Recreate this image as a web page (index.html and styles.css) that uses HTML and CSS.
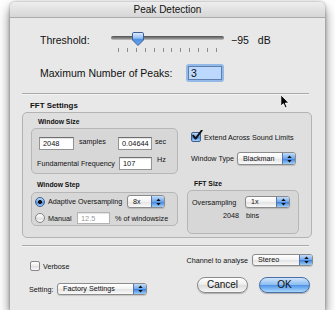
FILE: index.html
```html
<!DOCTYPE html>
<html lang="en">
<head>
    <meta charset="UTF-8">
    <title>Peak Detection</title>
    <link rel="stylesheet" href="styles.css">
</head>
<body>
    <div class="window">
        <div class="titlebar">Peak Detection</div>

        <div class="content">
            <div class="threshold">
                <span class="big th-label">Threshold:</span>
                <div class="slider">
                    <div class="track"></div>
                    <div class="ticks">
                        <i></i><i></i><i></i><i></i><i></i><i></i>
                        <i></i><i></i><i></i><i></i><i></i><i></i>
                    </div>
                    <svg class="knob" viewBox="0 0 12 14">
                        <defs>
                            <linearGradient id="kg" x1="0" y1="0" x2="0" y2="1">
                                <stop offset="0" stop-color="#e4f0fd"/>
                                <stop offset="0.45" stop-color="#8dbdf3"/>
                                <stop offset="0.5" stop-color="#4f8fe2"/>
                                <stop offset="1" stop-color="#6aa8ef"/>
                            </linearGradient>
                        </defs>
                        <path d="M1.8 0.5H10.2Q11.5 0.5 11.5 1.8V8L6 13.5L0.5 8V1.8Q0.5 0.5 1.8 0.5Z" fill="url(#kg)" stroke="#3d5f94" stroke-width="1"/>
                    </svg>
                </div>
                <span class="big val">&minus;95</span>
                <span class="big unit">dB</span>
            </div>

            <div class="peaks">
                <span class="big peaks-label">Maximum Number of Peaks:</span>
                <span class="focus"><span class="sel">3</span></span>
            </div>

            <div class="sep"></div>

            <div class="group-title">FFT Settings</div>
            <div class="fft">
                <div class="col-left">
                    <div class="box-title">Window Size</div>
                    <div class="inner size">
                        <div class="line">
                            <span class="field w35">2048</span>
                            <span class="small samples">samples</span>
                            <span class="field w34">0.04644</span>
                            <span class="small sec">sec</span>
                        </div>
                        <div class="line second">
                            <span class="small fund">Fundamental Frequency</span>
                            <span class="field w33">107</span>
                            <span class="small hz">Hz</span>
                        </div>
                    </div>

                    <div class="box-title step-title">Window Step</div>
                    <div class="inner step">
                        <div class="line">
                            <span class="radio on"></span>
                            <span class="small adaptive">Adaptive Oversampling</span>
                            <span class="popup p8x"><span class="popup-text">8x</span><span class="arrows"><svg viewBox="0 0 5 8"><path d="M2.5 0.5L4.7 3H0.3Z M2.5 7.5L4.7 5H0.3Z" fill="#111"/></svg></span></span>
                        </div>
                        <div class="line second-step">
                            <span class="radio"></span>
                            <span class="small manual">Manual</span>
                            <span class="field w33 disabled">12.5</span>
                            <span class="small pct">% of windowsize</span>
                        </div>
                    </div>
                </div>

                <div class="col-right">
                    <div class="check-row">
                        <span class="checkbox on">
                            <svg viewBox="0 0 12 12"><path d="M2.2 5.6L4.6 8.6L10.8 0.4" fill="none" stroke="#111" stroke-width="1.9" stroke-linecap="round" stroke-linejoin="round"/></svg>
                        </span>
                        <span class="small extend">Extend Across Sound Limits</span>
                    </div>
                    <div class="type-row">
                        <span class="small type-label">Window Type</span>
                        <span class="popup pblack"><span class="popup-text">Blackman</span><span class="arrows"><svg viewBox="0 0 5 8"><path d="M2.5 0.5L4.7 3H0.3Z M2.5 7.5L4.7 5H0.3Z" fill="#111"/></svg></span></span>
                    </div>
                    <div class="box-title size-title">FFT Size</div>
                    <div class="inner fftsize">
                        <div class="line">
                            <span class="small over">Oversampling</span>
                            <span class="popup p1x"><span class="popup-text">1x</span><span class="arrows"><svg viewBox="0 0 5 8"><path d="M2.5 0.5L4.7 3H0.3Z M2.5 7.5L4.7 5H0.3Z" fill="#111"/></svg></span></span>
                        </div>
                        <div class="bins">
                            <span class="small">2048</span>
                            <span class="small bins-unit">bins</span>
                        </div>
                    </div>
                </div>
            </div>

            <div class="sep sep2"></div>

            <div class="bottom-a">
                <div class="verbose">
                    <span class="checkbox"></span>
                    <span class="small verbose-text">Verbose</span>
                </div>
                <div class="channel">
                    <span class="small">Channel to analyse</span>
                    <span class="popup pstereo"><span class="popup-text">Stereo</span><span class="arrows"><svg viewBox="0 0 5 8"><path d="M2.5 0.5L4.7 3H0.3Z M2.5 7.5L4.7 5H0.3Z" fill="#111"/></svg></span></span>
                </div>
            </div>

            <div class="bottom-b">
                <div class="setting">
                    <span class="small setting-label">Setting:</span>
                    <span class="popup pfactory"><span class="popup-text">Factory Settings</span><span class="arrows"><svg viewBox="0 0 5 8"><path d="M2.5 0.5L4.7 3H0.3Z M2.5 7.5L4.7 5H0.3Z" fill="#111"/></svg></span></span>
                </div>
                <div class="buttons">
                    <span class="btn">Cancel</span>
                    <span class="btn default">OK</span>
                </div>
            </div>
        </div>

        <!-- mouse pointer over the dialog -->
        <svg class="cursor" viewBox="0 0 10 15">
            <path d="M0.8 0.8V12.2L3.4 9.7L5.3 13.9L7.1 13.1L5.3 9.1H8.9Z" fill="#000" stroke="#fff" stroke-width="0.9" stroke-linejoin="round"/>
        </svg>
    </div>
</body>
</html>
```

FILE: styles.css
```css
body {
    margin: 0;
    background: #fff;
    font-family: "Liberation Sans", Arial, sans-serif;
    color: #111;
}

.window {
    position: relative;
    margin: 2px 0 0 10px;
    width: 315px;
    height: 308px;
    background: #e8e8e8;
    border-radius: 5px 5px 0 0;
    box-shadow: 0 6px 12px rgba(0, 0, 0, 0.55), 0 0 3px rgba(0, 0, 0, 0.35);
}

.titlebar {
    height: 15px;
    line-height: 15px;
    border-bottom: 1px solid #ababab;
    border-radius: 5px 5px 0 0;
    background: linear-gradient(#eeeeee, #d6d6d6);
    text-align: center;
    font-size: 10px;
}

.content {
    padding: 0 13px 0 12px;
}

.big {
    font-size: 10.5px;
    line-height: 24px;
}

.small {
    font-size: 7.2px;
    white-space: nowrap;
}

/* threshold slider */
.threshold {
    display: flex;
    margin-top: 10px;
    height: 24px;
}

.th-label {
    width: 71px;
    padding-left: 18px;
}

.slider {
    position: relative;
    width: 113px;
    height: 24px;
}

.track {
    margin-top: 8px;
    height: 4px;
    border-radius: 2px;
    background: linear-gradient(#4e4e4e, #8a8a8a 60%, #c4c4c4);
}

.ticks {
    display: flex;
    justify-content: space-between;
    width: 99px;
    margin: 8px 0 0 7px;
}

.ticks i {
    width: 1px;
    height: 4px;
    background: #8c8c8c;
}

.knob {
    position: absolute;
    left: 21px;
    top: 4px;
    width: 12px;
    height: 14px;
}

.val {
    margin-left: 7px;
}

.unit {
    margin-left: 9px;
}

/* max peaks */
.peaks {
    display: flex;
    align-items: center;
    margin-top: 12px;
    height: 18px;
}

.peaks-label {
    width: 146px;
    padding-left: 18px;
    line-height: 18px;
}

.focus {
    width: 38px;
    height: 18px;
    box-sizing: border-box;
    padding: 2px;
    border-radius: 3px;
    background: #93b9e8;
}

.sel {
    display: block;
    height: 100%;
    box-sizing: border-box;
    border: 1px solid #5f7fae;
    background: #bcd8fd;
    font-size: 10.5px;
    line-height: 12px;
    padding-left: 2px;
}

.sep {
    height: 1px;
    margin: 11px 3px 0 0;
    background: #a9a9a9;
    box-shadow: 0 1px 0 #f4f4f4;
}

.group-title {
    margin-top: 6px;
    padding-left: 8px;
    height: 12px;
    line-height: 12px;
    font-size: 7.9px;
    font-weight: bold;
}

/* group boxes */
.fft {
    display: flex;
    height: 126px;
    box-sizing: border-box;
    padding: 3px 0 0 8px;
    border: 1px solid #b3b3b3;
    border-radius: 5px;
    background: rgba(0, 0, 0, 0.035);
}

.col-left {
    width: 147px;
}

.col-right {
    margin-left: 9px;
    flex: 1;
}

.box-title {
    height: 12px;
    line-height: 12px;
    padding-left: 7px;
    font-size: 6.8px;
    font-weight: bold;
    white-space: nowrap;
}

.inner {
    box-sizing: border-box;
    border: 1px solid #b6b6b6;
    border-radius: 5px;
    background: rgba(0, 0, 0, 0.035);
}

.line {
    display: flex;
    align-items: center;
}

.field {
    height: 13px;
    box-sizing: border-box;
    border: 1px solid #939393;
    border-top-color: #6f6f6f;
    background: #fff;
    box-shadow: inset 0 1px 1px rgba(0, 0, 0, 0.12);
    font-size: 7.4px;
    line-height: 11px;
    padding-left: 3px;
}

.field.disabled {
    height: 12px;
    color: #9c9c9c;
    border-color: #b4b4b4;
}

.w35 { width: 35px; }
.w34 { width: 34px; }
.w33 { width: 33px; }

.size {
    height: 46px;
    padding: 8px 0 0 7px;
}

.samples {
    margin-left: 5px;
    width: 39px;
    align-self: flex-start;
}

.sec {
    margin-left: 3px;
    align-self: flex-start;
}

.second {
    margin-top: 7px;
}

.fund {
    margin-left: -2px;
    width: 82px;
}

.hz {
    margin-left: 5px;
    align-self: flex-start;
    margin-top: -2px;
}

.step-title {
    margin-top: 5px;
    padding-left: 6px;
}

.step {
    height: 34px;
    margin-top: 1px;
    padding: 2px 0 0 3px;
}

.second-step {
    margin-top: 4px;
}

.adaptive {
    margin-left: 3px;
    width: 79px;
}

.manual {
    margin-left: 3px;
    width: 29px;
}

.pct {
    margin-left: 5px;
}

/* radios and checkboxes */
.radio {
    width: 10px;
    height: 10px;
    box-sizing: border-box;
    border: 1px solid #878787;
    border-radius: 50%;
    background: linear-gradient(#ffffff, #e9e9e9 50%, #dcdcdc 51%, #fafafa);
}

.radio.on {
    border-color: #3e5f91;
    background: radial-gradient(circle, #111 0 1.6px, transparent 2.3px),
        linear-gradient(#c2dcf8, #6aa3ea 50%, #3f82dc 51%, #a3d2fb);
}

.checkbox {
    position: relative;
    width: 10px;
    height: 10px;
    box-sizing: border-box;
    border: 1px solid #878787;
    border-radius: 2px;
    background: linear-gradient(#ffffff, #ebebeb 50%, #dedede 51%, #fafafa);
}

.checkbox.on {
    border-color: #3e5f91;
    background: linear-gradient(#c2dcf8, #6aa3ea 50%, #3f82dc 51%, #a3d2fb);
}

.checkbox svg {
    position: absolute;
    left: -1px;
    top: -3px;
    width: 12px;
    height: 12px;
}

/* popup buttons */
.popup {
    display: flex;
    height: 13px;
    box-sizing: border-box;
    border: 1px solid #8b8b8b;
    border-radius: 3px;
    background: linear-gradient(#ffffff, #f2f2f2 50%, #e3e3e3 51%, #f9f9f9);
    box-shadow: 0 1px 1px rgba(0, 0, 0, 0.15);
}

.popup-text {
    flex: 1;
    padding-left: 5px;
    font-size: 7.2px;
    line-height: 11px;
    white-space: nowrap;
}

.arrows {
    display: flex;
    align-items: center;
    justify-content: center;
    width: 12px;
    border-left: 1px solid #5675a6;
    border-radius: 0 2px 2px 0;
    background: linear-gradient(#c4ddf9, #6ea6ec 50%, #3b7fdb 51%, #9fcff9);
}

.arrows svg {
    width: 5px;
    height: 8px;
}

.p8x { width: 38px; }
.pblack { width: 59px; }
.p1x { width: 45px; height: 12px; }
.pstereo { width: 61px; height: 12px; }
.pfactory { width: 90px; height: 12px; }

.p1x .popup-text,
.pstereo .popup-text,
.pfactory .popup-text {
    line-height: 10px;
}

/* right column */
.check-row {
    display: flex;
    align-items: center;
    margin-top: 16px;
    height: 10px;
    padding-left: 4px;
}

.extend {
    margin-left: 3px;
}

.type-row {
    display: flex;
    align-items: center;
    margin-top: 10px;
    height: 13px;
    padding-left: 4px;
}

.type-label {
    width: 46px;
}

.size-title {
    margin-top: 13px;
}

.fftsize {
    width: 112px;
    height: 44px;
    padding: 5px 0 0 4px;
}

.over {
    width: 53px;
}

.bins {
    display: flex;
    margin-top: 3px;
    height: 10px;
    line-height: 10px;
    padding-left: 31px;
}

.bins-unit {
    margin-left: 7px;
}

.sep2 {
    margin-top: 7px;
}

/* bottom rows */
.bottom-a {
    display: flex;
    margin-top: 8px;
    height: 17px;
}

.verbose {
    display: flex;
    align-items: center;
    align-self: flex-end;
    padding-left: 8px;
}

.verbose-text {
    margin-left: 3px;
}

.channel {
    display: flex;
    align-items: center;
    align-self: flex-start;
    margin: 0 -1px 0 auto;
}

.channel .popup {
    margin-left: 4px;
}

.bottom-b {
    display: flex;
    margin-top: 6px;
    height: 19px;
}

.setting {
    display: flex;
    align-items: center;
    align-self: flex-end;
    margin-bottom: 1px;
}

.setting-label {
    width: 28px;
    padding-left: 7px;
}

.buttons {
    display: flex;
    gap: 11px;
    align-self: flex-start;
    margin: 0 2px 0 auto;
}

.btn {
    width: 51px;
    height: 16px;
    box-sizing: border-box;
    border: 1px solid #8a8a8a;
    border-radius: 8px;
    background: linear-gradient(#ffffff, #ececec 50%, #dcdcdc 51%, #f6f6f6);
    box-shadow: 0 1px 1px rgba(0, 0, 0, 0.25);
    text-align: center;
    font-size: 10px;
    line-height: 14px;
}

.btn.default {
    border-color: #4a6ea6;
    background: linear-gradient(#d0e5fb, #8abbf1 50%, #4e92e6 51%, #aad8fc);
}

.cursor {
    position: absolute;
    left: 270px;
    top: 92px;
    width: 10px;
    height: 15px;
}
```
